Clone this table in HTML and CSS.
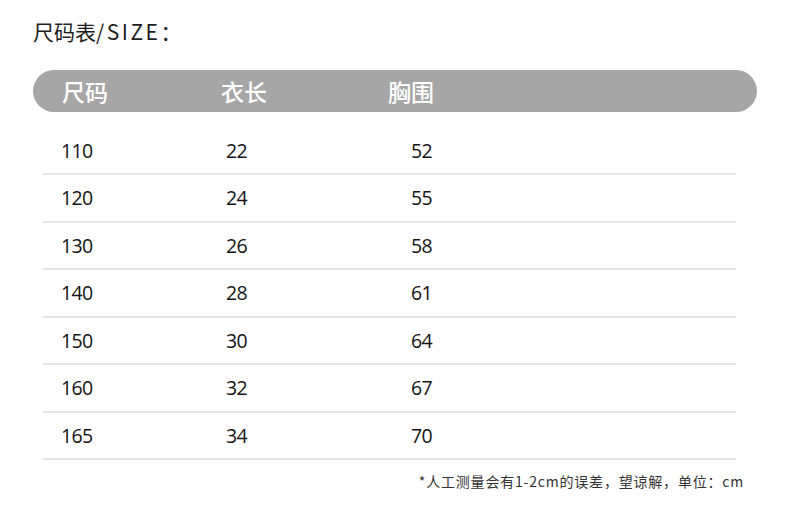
FILE: index.html
```html
<!DOCTYPE html>
<html lang="zh-CN">
<head>
<meta charset="utf-8">
<title>尺码表</title>
<link rel="stylesheet" href="styles.css">
</head>
<body>
<div class="page">
  <h1 class="title">尺码表<span class="latin">/SIZE</span>：</h1>
  <div class="bar">
    <span class="bh">尺码</span>
    <span class="bh">衣长</span>
    <span class="bh">胸围</span>
  </div>
  <div class="table">
    <div class="row"><span>110</span><span>22</span><span>52</span></div>
    <div class="row"><span>120</span><span>24</span><span>55</span></div>
    <div class="row"><span>130</span><span>26</span><span>58</span></div>
    <div class="row"><span>140</span><span>28</span><span>61</span></div>
    <div class="row"><span>150</span><span>30</span><span>64</span></div>
    <div class="row"><span>160</span><span>32</span><span>67</span></div>
    <div class="row"><span>165</span><span>34</span><span>70</span></div>
  </div>
  <p class="note">*人工测量会有1-2cm的误差，望谅解，单位：cm</p>
</div>
</body>
</html>
```
FILE: styles.css
```css
html, body {
  margin: 0;
  padding: 0;
  background: #ffffff;
}
body {
  font-family: "Noto Sans CJK SC", "Noto Sans", sans-serif;
  color: #222222;
}
.page {
  padding: 16px 0 0 33px;
  width: 724px;
}
.title {
  margin: 0;
  font-size: 21px;
  line-height: 30px;
  font-weight: 400;
  color: #1e1e1e;
}
.title .latin {
  letter-spacing: 2.5px;
}
.bar {
  margin-top: 24px;
  height: 42px;
  border-radius: 21px;
  background: #a6a6a6;
  display: grid;
  grid-template-columns: 159px 167px 1fr;
  align-items: center;
  padding-left: 29px;
  box-sizing: border-box;
}
.bh {
  color: #ffffff;
  font-size: 23px;
  line-height: 42px;
  font-weight: 500;
}
.table {
  margin: 15.5px 0 0 10px;
  width: 693px;
}
.row {
  height: 47.5px;
  box-sizing: border-box;
  border-bottom: 2px solid #e6e6e6;
  display: grid;
  grid-template-columns: 165px 185px 1fr;
  align-items: center;
  padding-left: 18px;
  font-family: "Open Sans", "Noto Sans", sans-serif;
  font-size: 19.5px;
  color: #141414;
  letter-spacing: -0.6px;
}
.note {
  margin: 11px 0 0 0;
  width: 711px;
  text-align: right;
  font-size: 14px;
  line-height: 20px;
  color: #333333;
  letter-spacing: 0.8px;
}
```
